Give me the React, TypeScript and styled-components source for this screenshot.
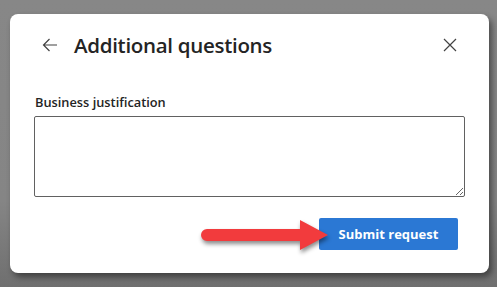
import React from "react";
import styled, { createGlobalStyle } from "styled-components";

const Global = createGlobalStyle`
  html, body { margin: 0; padding: 0; }
  body {
    width: 497px;
    height: 287px;
    overflow: hidden;
    background: linear-gradient(180deg, #878787 0%, #858585 70%, #6f6f6f 100%);
    font-family: "Open Sans", "Noto Sans", sans-serif;
  }
`;

const Page = styled.div`
  box-sizing: border-box;
  width: 497px;
  height: 287px;
  padding: 14px 8px 14px 10px;
`;

const Card = styled.div`
  position: relative;
  box-sizing: border-box;
  width: 479px;
  height: 259px;
  background: #ffffff;
  border-radius: 8px;
  box-shadow: 3px 4px 6px rgba(0, 0, 0, 0.45);
  padding: 17px 24px 23px 24px;
  display: flex;
  flex-direction: column;
`;

const Header = styled.div`
  height: 28px;
  display: flex;
  align-items: center;
  padding: 0 8px;
  gap: 16px;
`;

const Title = styled.h1`
  margin: 0;
  flex: 1;
  font-size: 20.5px;
  font-weight: 600;
  color: #242424;
  letter-spacing: -0.3px;
  line-height: 28px;
`;

const IconButton = styled.span`
  display: flex;
  align-items: center;
  justify-content: center;
  color: #424242;
`;

const Label = styled.label`
  margin-top: 34px;
  font-size: 12.8px;
  font-weight: 600;
  color: #242424;
  line-height: 18px;
  padding-left: 1px;
`;

const TextArea = styled.textarea`
  box-sizing: border-box;
  margin-top: 5px;
  width: 431px;
  height: 81px;
  border: 1px solid #616161;
  border-radius: 2px;
  resize: both;
  font-family: inherit;
`;

const Footer = styled.div`
  margin-top: 21px;
  display: flex;
  justify-content: flex-end;
  padding-right: 7px;
`;

const PrimaryButton = styled.button`
  width: 139px;
  height: 32px;
  border: none;
  border-radius: 2px;
  background: #2b78d4;
  color: #ffffff;
  font-family: inherit;
  font-size: 13px;
  font-weight: 700;
  padding: 0;
`;

const Arrow = styled.svg`
  position: absolute;
  left: 189px;
  top: 204px;
  filter: drop-shadow(1px 3px 2px rgba(0, 0, 0, 0.45));
`;

export default function App() {
  return (
    <>
      <Global />
      <Page>
        <Card>
          <Header>
            <IconButton>
              <svg width="16" height="16" viewBox="0 0 16 16" fill="none">
                <path d="M15 8H1.5M7.5 2L1.5 8l6 6" stroke="#424242" strokeWidth="1.2" />
              </svg>
            </IconButton>
            <Title>Additional questions</Title>
            <IconButton>
              <svg width="14" height="14" viewBox="0 0 14 14" fill="none">
                <path d="M1 1l12 12M13 1L1 13" stroke="#424242" strokeWidth="1.2" />
              </svg>
            </IconButton>
          </Header>
          <Label>Business justification</Label>
          <TextArea />
          <Footer>
            <PrimaryButton>Submit request</PrimaryButton>
          </Footer>
          <Arrow width="135" height="36" viewBox="0 0 135 36">
            <path
              d="M8 11 H101 V2 L129 17 L101 32 V23 H8 A6 6 0 0 1 8 11 Z"
              fill="#f23b3d"
            />
          </Arrow>
        </Card>
      </Page>
    </>
  );
}
